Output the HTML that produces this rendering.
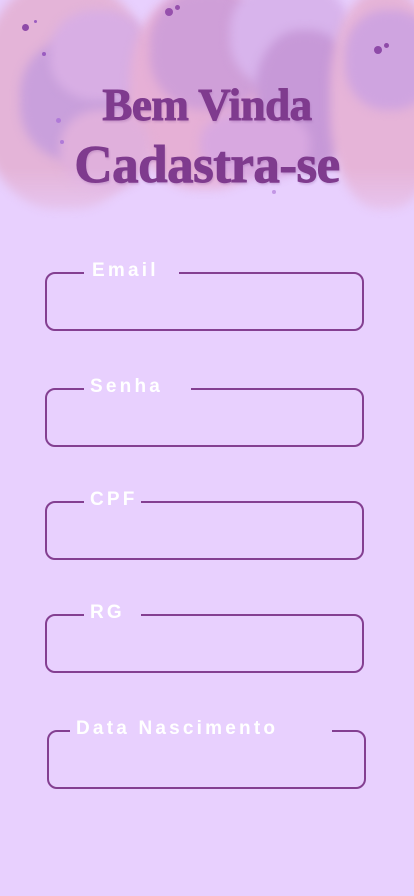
<!DOCTYPE html>
<html><head><meta charset="utf-8">
<style>
html,body{margin:0;padding:0}
body{width:414px;height:896px;position:relative;overflow:hidden;background:#e8d0fe;font-family:"Liberation Sans",sans-serif}
.wc{position:absolute;left:0;top:0;width:414px;height:240px;overflow:hidden;-webkit-mask-image:linear-gradient(#000 70%,transparent 100%);mask-image:linear-gradient(#000 70%,transparent 100%)}
.b{position:absolute;border-radius:45%;filter:blur(5px)}
h1{position:absolute;left:0;width:414px;text-align:center;margin:0;font-family:"Liberation Serif",serif;font-weight:bold;color:#7f3b8e;letter-spacing:-0.5px;text-shadow:1px 2px 2px rgba(120,60,140,.25);-webkit-text-stroke:1px #7f3b8e}
.f{position:absolute;border:2px solid #843f91;border-radius:10px;box-sizing:border-box;height:59px}
.l{position:absolute;top:-15px;background:#e8d0fe;color:#fff;font-weight:bold;font-size:19px;letter-spacing:3.2px;line-height:24px;padding:0 0 0 8px;box-sizing:border-box;white-space:nowrap}
.d{position:absolute;width:4px;height:4px;border-radius:50%;background:#9a5cc0}
</style></head><body>
<div class="wc">
  <div class="b" style="left:-20px;top:-20px;width:170px;height:230px;background:#e4b4d8"></div>
  <div class="b" style="left:20px;top:40px;width:110px;height:120px;background:#c9a0dc"></div>
  <div class="b" style="left:50px;top:10px;width:100px;height:90px;background:#d8aee4"></div>
  <div class="b" style="left:130px;top:-10px;width:150px;height:200px;background:#e6b0d6"></div>
  <div class="b" style="left:150px;top:-10px;width:120px;height:120px;background:#cf9fd8"></div>
  <div class="b" style="left:230px;top:-20px;width:120px;height:110px;background:#d8b4ec"></div>
  <div class="b" style="left:255px;top:30px;width:100px;height:140px;background:#c799d8"></div>
  <div class="b" style="left:330px;top:-10px;width:110px;height:220px;background:#e6b4d8"></div>
  <div class="b" style="left:345px;top:10px;width:90px;height:100px;background:#cfa4e0"></div>
  <div class="b" style="left:200px;top:110px;width:110px;height:70px;background:#d8a8e0"></div>
  <div class="b" style="left:60px;top:110px;width:90px;height:80px;background:#e0b0dc"></div>
  <div class="d" style="left:34px;top:20px;width:3px;height:3px"></div>
  <div class="d" style="left:22px;top:24px;width:7px;height:7px;background:#8e4aa8"></div>
  <div class="d" style="left:165px;top:8px;width:8px;height:8px;background:#9650ac"></div>
  <div class="d" style="left:175px;top:5px;width:5px;height:5px;background:#9650ac"></div>
  <div class="d" style="left:374px;top:46px;width:8px;height:8px;background:#8e4aa8"></div>
  <div class="d" style="left:384px;top:43px;width:5px;height:5px;background:#8e4aa8"></div>
  <div class="d" style="left:42px;top:52px"></div>
  <div class="d" style="left:56px;top:118px;width:5px;height:5px;background:#b07ad8"></div>
  <div class="d" style="left:60px;top:140px;background:#b07ad8"></div>
  <div class="d" style="left:272px;top:190px;background:#b07ad8"></div>
</div>
<h1 style="top:79px;font-size:45px;line-height:52px">Bem Vinda</h1>
<h1 style="top:136px;font-size:53px;line-height:58px">Cadastra-se</h1>

<div class="f" style="left:45px;top:272px;width:319px"><div class="l" style="left:37px;width:95px">Email</div></div>
<div class="f" style="left:45px;top:388px;width:319px"><div class="l" style="left:37px;width:107px;padding-left:6px">Senha</div></div>
<div class="f" style="left:45px;top:501px;width:319px"><div class="l" style="left:37px;width:57px;padding-left:6px">CPF</div></div>
<div class="f" style="left:45px;top:614px;width:319px"><div class="l" style="left:37px;width:57px;padding-left:6px">RG</div></div>
<div class="f" style="left:47px;top:730px;width:319px"><div class="l" style="left:21px;width:262px;padding-left:6px">Data Nascimento</div></div>
</body></html>
